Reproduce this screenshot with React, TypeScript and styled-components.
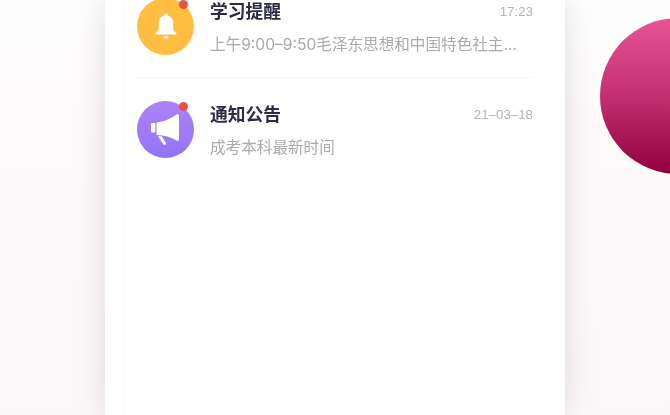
import styled, { createGlobalStyle } from 'styled-components';

const GlobalStyle = createGlobalStyle`
  html, body {
    margin: 0;
    height: 100%;
  }
  body {
    font-family: Inter, 'Noto Sans CJK SC', sans-serif;
    background: #fbf7f9;
  }
`;

const messages = [
  {
    id: 1,
    kind: 'bell',
    title: '学习提醒',
    time: '17:23',
    text: '上午9:00–9:50毛泽东思想和中国特色社主…',
  },
  {
    id: 2,
    kind: 'notice',
    title: '通知公告',
    time: '21–03–18',
    text: '成考本科最新时间',
  },
];

const BellIcon = () => (
  <svg width="22" height="27" viewBox="0 0 22 27" fill="#fff">
    <path d="M11 0.500c1.200 0 2 .8 2.100 1.900 3.300 1 5.100 3.900 5.100 7.400v6.300c0 1 .5 1.700 1.200 2.300l1.800 1.700c.6.600.3 1.400-.5 1.400H1.300c-.8 0-1.100-.8-.5-1.400l1.800-1.700c.7-.6 1.200-1.300 1.200-2.300V9.800c0-3.500 1.800-6.400 5.100-7.400C9 1.300 9.800.5 11 .5z" />
    <path d="M8.500 23.300h5c0 1.500-1.100 2.700-2.500 2.700s-2.500-1.200-2.500-2.700z" />
  </svg>
);

const NoticeIcon = () => (
  <svg width="29" height="31" viewBox="0 0 29 31" fill="#fff">
    <rect x="0" y="9" width="4.300" height="9.500" rx="1" />
    <path d="M5.500 8.500C13 7.800 20 4.500 25.500.5c1-.7 2.500-.2 2.500 1.200v23.600c0 1.400-1.500 1.900-2.500 1.200-5.500-3.700-12.500-5-20-5.500z" />
    <path d="M7 22.300l3.600-.1 4.200 6.400c.5.800.2 1.600-.6 2.100-.8.400-1.600.2-2.100-.6z" />
  </svg>
);

const App = () => {
  return (
    <>
      <GlobalStyle />
      <Page>
        <Panel>
          <Sheet>
            <List>
              {messages.map((item) => (
                <Row key={item.id}>
                  <Avatar $kind={item.kind}>
                    {item.kind === 'bell' ? <BellIcon /> : <NoticeIcon />}
                    <Dot />
                  </Avatar>
                  <Body>
                    <TopLine>
                      <Title>{item.title}</Title>
                      <Time>{item.time}</Time>
                    </TopLine>
                    <Text>{item.text}</Text>
                  </Body>
                </Row>
              ))}
            </List>
          </Sheet>
        </Panel>
        <Ball />
      </Page>
    </>
  );
};

export default App;

const Page = styled.div`
  position: relative;
  width: 670px;
  height: 415px;
  overflow: hidden;
  display: flex;
  justify-content: center;
  background: linear-gradient(180deg, #fffefe 0%, #fdfafb 30%, #fcf8fa 100%);
`;

const Panel = styled.div`
  width: 460px;
  height: 100%;
  padding: 0 18px;
  box-sizing: border-box;
  background: #ffffff;
  box-shadow: 0 0 30px rgba(90, 70, 80, 0.18);
`;

const Sheet = styled.div`
  height: 100%;
  display: flex;
  flex-direction: column;
  padding: 0 13px 0 13px;
  box-sizing: border-box;
  border-left: 1px solid #fcfbfb;
  border-right: 1px solid #fcfbfb;
`;

const List = styled.div`
  margin-top: -24px;
  filter: blur(0.35px);
`;

const Row = styled.div`
  height: 102px;
  box-sizing: border-box;
  display: flex;
  align-items: center;
  gap: 16px;
  border-bottom: 1px solid #f6f4f5;
  &:last-child {
    border-bottom: none;
  }
`;

const Avatar = styled.div<{ $kind: string }>`
  position: relative;
  flex: none;
  width: 57px;
  height: 57px;
  border-radius: 50%;
  display: flex;
  align-items: center;
  justify-content: center;
  background: ${(p) =>
    p.$kind === 'bell' ? '#ffbe42' : 'linear-gradient(180deg, #ae82f8 0%, #9274f6 100%)'};
`;

const Dot = styled.span`
  position: absolute;
  top: 1.500px;
  right: 6.500px;
  width: 9px;
  height: 9px;
  border-radius: 50%;
  background: #e8533f;
`;

const Body = styled.div`
  flex: 1;
  min-width: 0;
  padding-top: 3px;
  display: flex;
  flex-direction: column;
  gap: 10px;
`;

const TopLine = styled.div`
  display: flex;
  align-items: center;
  justify-content: space-between;
`;

const Title = styled.div`
  font-size: 17.800px;
  line-height: 24px;
  font-weight: 700;
  color: #2b2b46;
`;

const Time = styled.div`
  font-family: 'Liberation Sans', sans-serif;
  font-size: 13.300px;
  line-height: 24px;
  color: #b4b4b8;
`;

const Text = styled.div`
  font-size: 15.600px;
  line-height: 22px;
  color: #aaaaae;
  white-space: nowrap;
`;

const Ball = styled.div`
  position: absolute;
  left: 600px;
  top: 18px;
  width: 156px;
  height: 156px;
  border-radius: 50%;
  background: linear-gradient(180deg, #e85596 0%, #c32f70 50%, #92003f 100%);
`;
